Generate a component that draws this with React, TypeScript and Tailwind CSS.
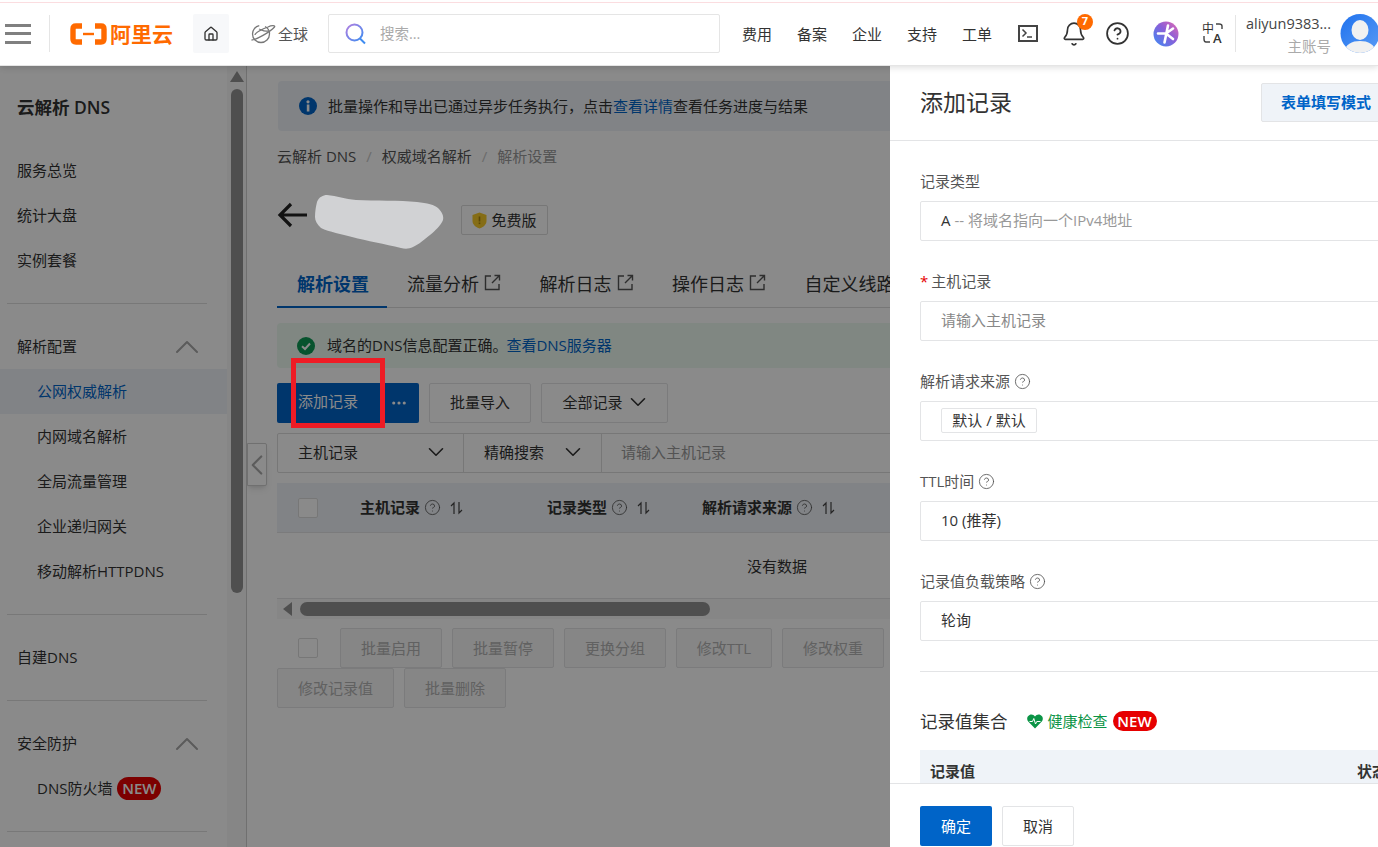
import React from "react";
import { Bell, ChevronDown, ChevronLeft, ChevronUp, CircleHelp, Home, MoreHorizontal } from "lucide-react";

function Ext() {
  return (
    <svg width="17" height="17" viewBox="0 0 17 17" fill="none" stroke="#555" strokeWidth="1.4" className="ml-[5px] mb-[4px] shrink-0">
      <path d="M7 2H1.5V15.5H15V10" />
      <path d="M8 9L15 2M10.5 1.5H15.5V6.5" />
    </svg>
  );
}

function Sort() {
  return (
    <svg width="13" height="14" viewBox="0 0 13 14" fill="none" strokeWidth="1.2" className="shrink-0">
      <path d="M4 13V2L1 5" stroke="#444" />
      <path d="M9 1V12L12 9" stroke="#444" />
    </svg>
  );
}

function Help({ s = 17 }: { s?: number }) {
  return <CircleHelp size={s} strokeWidth={1.2} className="text-[#555] shrink-0" />;
}

function NavRow({ text, active, sub }: { text: React.ReactNode; active?: boolean; sub?: boolean }) {
  return (
    <div
      className={`h-[45px] flex items-center text-[15px] ${sub ? "pl-[37px]" : "pl-[17px]"} ${
        active ? "bg-[#eff3f8] text-[#0064c8]" : "text-[#333]"
      }`}
    >
      {text}
    </div>
  );
}

function NavGroup({ text }: { text: string }) {
  return (
    <div className="h-[45px] flex items-center justify-between pl-[17px] pr-[20px] text-[15px] text-[#333]">
      <span>{text}</span>
      <ChevronUp size={40} strokeWidth={1.2} className="text-[#a8a8a8]" />
    </div>
  );
}

function Divider() {
  return <div className="my-[20px] ml-[7px] w-[200px] border-t border-[#dedede]" />;
}

function Sidebar() {
  return (
    <aside className="w-[247px] shrink-0 flex bg-white border-r border-[#cfcfcf] overflow-hidden">
      <div className="w-[227px] shrink-0">
        <div className="h-[82px] pl-[17px] flex items-center text-[17.5px] font-semibold text-[#333]">云解析 DNS</div>
        <NavRow text="服务总览" />
        <NavRow text="统计大盘" />
        <NavRow text="实例套餐" />
        <Divider />
        <NavGroup text="解析配置" />
        <NavRow sub active text="公网权威解析" />
        <NavRow sub text="内网域名解析" />
        <NavRow sub text="全局流量管理" />
        <NavRow sub text="企业递归网关" />
        <NavRow sub text="移动解析HTTPDNS" />
        <Divider />
        <NavRow text="自建DNS" />
        <Divider />
        <NavGroup text="安全防护" />
        <NavRow
          sub
          text={
            <span className="flex items-center gap-[5px]">
              DNS防火墙
              <span className="h-[23px] w-[44px] rounded-full bg-[#e60000] text-white text-[15px] font-semibold flex items-center justify-center">
                NEW
              </span>
            </span>
          }
        />
        <Divider />
      </div>
      <div className="w-[19px] shrink-0 bg-[#f8f8f8] flex flex-col items-center pt-[5px]">
        <div className="w-0 h-0 border-x-[7px] border-x-transparent border-b-[11px] border-b-[#939393]" />
        <div className="mt-[7px] w-[12px] h-[504px] rounded-full bg-[#939393]" />
      </div>
    </aside>
  );
}

function Btn({ w, children, disabled }: { w: string; children: React.ReactNode; disabled?: boolean }) {
  return (
    <div
      className={`${w} h-[40px] shrink-0 rounded-[2px] border border-[#e3e4e6] flex items-center justify-center text-[15px] ${
        disabled ? "bg-[#f7f7f7] text-[#b3b3b3]" : "bg-white text-[#333]"
      }`}
    >
      {children}
    </div>
  );
}

function Tab({ text }: { text: string }) {
  return (
    <div className="h-full w-[132.5px] shrink-0 pl-[20px] pt-[1px] flex items-center text-[18px] text-[#333] whitespace-nowrap">
      {text}
      <Ext />
    </div>
  );
}

function Col({ w, text }: { w: string; text: string }) {
  return (
    <div className={`${w} shrink-0 flex items-center font-bold text-[15px] text-[#333]`}>
      {text}
      <span className="ml-[4px] mr-[9px]">
        <Help />
      </span>
      <Sort />
    </div>
  );
}

function Content() {
  return (
    <main className="relative w-[643px] shrink-0 bg-white pl-[31px] pt-[15px] overflow-hidden">
      <div className="w-[800px] h-[50px] rounded-[4px] bg-[#eff3f8] flex items-center pl-[21px] text-[15px] text-[#333]">
        <svg width="18" height="18" viewBox="0 0 18 18" className="mr-[11px] shrink-0">
          <circle cx="9" cy="9" r="9" fill="#0064c8" />
          <rect x="7.8" y="7.5" width="2.6" height="7" fill="#fff" />
          <circle cx="9" cy="4.8" r="1.6" fill="#fff" />
        </svg>
        批量操作和导出已通过异步任务执行，点击<span className="text-[#0064c8]">查看详情</span>查看任务进度与结果
      </div>

      <div className="mt-[15px] h-[20px] -ml-[1px] flex items-center text-[15px] text-[#555]">
        <span>云解析 DNS</span>
        <span className="mx-[10px] text-[#c8c8c8]">/</span>
        <span>权威域名解析</span>
        <span className="mx-[10px] text-[#c8c8c8]">/</span>
        <span className="text-[#999]">解析设置</span>
      </div>

      <div className="mt-[39px] h-[30px] -ml-[1px] flex items-center">
        <svg width="30" height="26" viewBox="0 0 30 26" fill="none" stroke="#222" strokeWidth="3.2" className="-mt-[10px] shrink-0">
          <path d="M30 13H3M14 2L3 13L14 24" />
        </svg>
        <div className="ml-[154px] w-[87px] h-[30px] rounded-[2px] border border-[#dcdcdc] flex items-center justify-center gap-[4px] text-[15px] text-[#333]">
          <svg width="15" height="17" viewBox="0 0 15 17" className="shrink-0">
            <path d="M7.5 0.5L14.5 3V9C14.5 13 10.5 15.5 7.5 16.5C4.5 15.5 0.5 13 0.5 9V3Z" fill="#f5c92a" />
            <rect x="6.7" y="4.5" width="1.6" height="5" fill="#a8850a" />
            <rect x="6.7" y="10.5" width="1.6" height="1.6" fill="#a8850a" />
          </svg>
          免费版
        </div>
      </div>

      <div className="mt-[26px] -ml-[1px] h-[47px] w-[800px] border-b border-[#dcdcdc] flex">
        <div className="w-[110px] h-[47px] shrink-0 border-b-2 border-[#0064c8] pl-[20px] pt-[1px] flex items-center text-[18px] font-semibold text-[#0064c8]">
          解析设置
        </div>
        <Tab text="流量分析" />
        <Tab text="解析日志" />
        <Tab text="操作日志" />
        <Tab text="自定义线路" />
      </div>

      <div className="mt-[15px] -ml-[1px] w-[800px] h-[45px] rounded-[4px] bg-[#ecfaf1] flex items-center pl-[20px] text-[15px] text-[#333]">
        <svg width="18" height="18" viewBox="0 0 18 18" fill="none" className="mr-[12px] shrink-0">
          <circle cx="9" cy="9" r="9" fill="#0d9a55" />
          <path d="M5 9.2L8 12L13 6.5" stroke="#fff" strokeWidth="2" />
        </svg>
        域名的DNS信息配置正确。<span className="-ml-[1px] text-[#0064c8]">查看DNS服务器</span>
      </div>

      <div className="mt-[15px] -ml-[1px] flex">
        <div className="w-[102px] h-[40px] rounded-l-[2px] bg-[#0064c8] text-white text-[15px] flex items-center pl-[21px] pb-[3px]">添加记录</div>
        <div className="w-[40px] h-[40px] rounded-r-[2px] bg-[#0064c8] text-white flex items-center justify-center">
          <MoreHorizontal size={18} strokeWidth={2.2} />
        </div>
        <div className="ml-[10px]">
          <Btn w="w-[102px] pb-[2px]">批量导入</Btn>
        </div>
        <div className="ml-[10px]">
          <Btn w="w-[127px] pb-[2px]">
            <span>全部记录</span>
            <ChevronDown size={26} strokeWidth={1.5} className="ml-[2px] -mr-[4px]" />
          </Btn>
        </div>
      </div>

      <div className="mt-[10px] -ml-[1px] w-[800px] h-[40px] rounded-[2px] border border-[#dcdcdc] flex items-center text-[15px] text-[#333]">
        <div className="w-[186px] h-full shrink-0 border-r border-[#dcdcdc] pl-[20px] pr-[14px] pb-[2px] flex items-center justify-between">
          主机记录 <ChevronDown size={26} strokeWidth={1.5} />
        </div>
        <div className="w-[138px] h-full shrink-0 border-r border-[#dcdcdc] pl-[20px] pr-[15px] pb-[2px] flex items-center justify-between">
          精确搜索 <ChevronDown size={26} strokeWidth={1.5} />
        </div>
        <div className="pl-[20px] pb-[2px] -ml-[1px] text-[#999]">请输入主机记录</div>
      </div>

      <div className="mt-[10px] -ml-[1px] w-[800px] h-[50px] bg-[#eff3f8] border-b border-[#e3e4e6] flex items-center pl-[21px]">
        <div className="w-[20px] h-[20px] rounded-[2px] border border-[#dcdcdc] bg-white shrink-0 mr-[42px]" />
        <Col w="w-[187px]" text="主机记录" />
        <Col w="w-[155px]" text="记录类型" />
        <Col w="w-[220px]" text="解析请求来源" />
      </div>
      <div className="-ml-[1px] w-[800px] h-[66px] pt-[1px] border-b border-[#e3e4e6] flex items-center pl-[470px] text-[15px] text-[#333]">
        没有数据
      </div>
      <div className="-ml-[1px] w-[800px] h-[20px] bg-[#f8f8f8] flex items-center pl-[6px]">
        <div className="w-0 h-0 border-y-[7px] border-y-transparent border-r-[9px] border-r-[#939393]" />
        <div className="ml-[8px] w-[410px] h-[14px] rounded-full bg-[#939393]" />
      </div>

      <div className="mt-[9px] -ml-[1px] w-[613px] flex flex-wrap">
        <div className="h-[40px] pl-[21px] pr-[22px] flex items-center">
          <div className="w-[20px] h-[20px] rounded-[2px] border border-[#dcdcdc] bg-white" />
        </div>
        <Btn w="w-[102px] mr-[10px]" disabled>批量启用</Btn>
        <Btn w="w-[102px] mr-[10px]" disabled>批量暂停</Btn>
        <Btn w="w-[102px] mr-[10px]" disabled>更换分组</Btn>
        <Btn w="w-[96px] mr-[10px]" disabled>修改TTL</Btn>
        <Btn w="w-[102px]" disabled>修改权重</Btn>
        <Btn w="w-[117px] mr-[10px]" disabled>修改记录值</Btn>
        <Btn w="w-[102px]" disabled>批量删除</Btn>
      </div>

      <div className="absolute left-0 top-[377px] w-[20px] h-[43px] bg-white border border-[#cfcfcf] rounded-r-[2px] shadow-md flex items-center justify-center text-[#aaa]">
        <ChevronLeft size={34} strokeWidth={1.5} className="shrink-0" />
      </div>
    </main>
  );
}

function Field({ label, children, help, req }: { label: string; children: React.ReactNode; help?: boolean; req?: boolean }) {
  return (
    <div className="mb-[30px]">
      <div className="h-[20px] pt-[1px] flex items-center text-[15px] text-[#555]">
        {req && <span className="text-[#e60000] mr-[3px]">*</span>}
        {label}
        {help && (
          <span className="ml-[4px]">
            <Help />
          </span>
        )}
      </div>
      <div className="mt-[10px] w-[520px] h-[40px] rounded-[2px] border border-[#e3e4e6] pl-[20px] pb-[1px] flex items-center text-[15px]">
        {children}
      </div>
    </div>
  );
}

function Drawer() {
  return (
    <section className="w-[488px] shrink-0 flex flex-col bg-white overflow-hidden">
      <div className="h-[75px] shrink-0 border-b border-[#e3e4e6] pl-[30px] flex items-center">
        <div className="w-[91px] shrink-0 -mt-[1px] text-[23px] text-[#333] whitespace-nowrap">添加记录</div>
        <div className="ml-[250px] w-[130px] h-[39px] -mt-[2px] shrink-0 rounded-[2px] bg-[#eff3f8] border border-[#e3e4e6] pl-[19px] flex items-center text-[15px] font-semibold text-[#0064c8] whitespace-nowrap">
          表单填写模式
        </div>
      </div>
      <div className="flex-1 overflow-hidden pl-[30px] pt-[30px]">
        <Field label="记录类型">
          <span className="text-[#333]">A</span>
          <span className="text-[#999] ml-[4px]">-- 将域名指向一个IPv4地址</span>
        </Field>
        <Field label="主机记录" req>
          <span className="text-[#888]">请输入主机记录</span>
        </Field>
        <Field label="解析请求来源" help>
          <span className="h-[25px] w-[96px] rounded-[2px] border border-[#e3e4e6] flex items-center justify-center text-[15px] text-[#333] whitespace-nowrap">
            默认 / 默认
          </span>
        </Field>
        <Field label="TTL时间" help>
          <span className="text-[#333]">10 (推荐)</span>
        </Field>
        <Field label="记录值负载策略" help>
          <span className="text-[#333]">轮询</span>
        </Field>
        <div className="w-[520px] border-t border-[#e3e4e6]" />
        <div className="mt-[39px] h-[20px] flex items-center">
          <span className="text-[17.5px] text-[#333]">记录值集合</span>
          <svg width="16" height="15" viewBox="0 0 16 15" className="ml-[19px] shrink-0">
            <path d="M8 14.5L1.2 7.5C-0.6 5.4 0 2 2.6 0.9C4.7 0 6.8 0.8 8 2.6C9.2 0.8 11.3 0 13.4 0.9C16 2 16.6 5.4 14.8 7.5Z" fill="#0b9446" />
            <path d="M2.5 7.5H5.5L6.8 4.5L8.5 10L9.8 7.5H13.5" fill="none" stroke="#fff" strokeWidth="1" />
          </svg>
          <span className="ml-[5px] text-[15px] text-[#0b9446]">健康检查</span>
          <span className="ml-[5px] h-[20px] w-[44px] rounded-full bg-[#e60000] text-white text-[15px] font-semibold flex items-center justify-center">
            NEW
          </span>
        </div>
        <div className="mt-[19px] w-[520px] h-[60px] bg-[#eff3f8] pl-[10px] pt-[10px] flex font-bold text-[15px] text-[#333]">
          <span className="w-[427px] shrink-0">记录值</span>
          <span>状态</span>
        </div>
      </div>
      <div className="h-[64px] shrink-0 border-t border-[#e3e4e6] pl-[30px] pt-[22px] flex gap-[10px] bg-white">
        <div className="w-[72px] h-[40px] rounded-[2px] bg-[#0064c8] text-white text-[15px] flex items-center justify-center">确定</div>
        <div className="w-[72px] h-[40px] rounded-[2px] border border-[#e3e4e6] text-[#333] text-[15px] flex items-center justify-center">取消</div>
      </div>
    </section>
  );
}

function Header() {
  return (
    <header className="relative z-20 shrink-0 bg-white shadow-[0_2px_6px_rgba(0,0,0,0.12)]">
      <div className="h-[3px] border-b border-[#fbdde0]" />
      <div className="h-[63px] flex items-center border-b border-[#e5e5e5] pb-[1px]">
        <div className="ml-[5px] w-[26px] h-[20px] flex flex-col justify-between shrink-0">
          <div className="h-[3px] bg-[#808080]" />
          <div className="h-[3px] bg-[#808080]" />
          <div className="h-[3px] bg-[#808080]" />
        </div>
        <div className="ml-[18px] h-[37px] shrink-0 border-l border-[#e5e5e5]" />
        <svg width="37" height="22" viewBox="0 0 37 22" className="ml-[20px] shrink-0" fill="none" stroke="#ff6a00" strokeLinejoin="round">
          <path d="M12 3H6C4 3 3 4 3 6V16C3 18 4 19 6 19H12" strokeWidth="5.4" />
          <path d="M25 3H31C33 3 34 4 34 6V16C34 18 33 19 31 19H25" strokeWidth="5.4" />
          <path d="M13 11H24" strokeWidth="2.4" />
        </svg>
        <span className="ml-[3px] mt-[1px] w-[63px] shrink-0 text-[21px] leading-none font-bold text-[#ff6a00] whitespace-nowrap">阿里云</span>
        <div className="ml-[20px] w-[36px] h-[39px] shrink-0 rounded-[2px] bg-[#f7f8fa] flex items-center justify-center">
          <Home size={16} strokeWidth={2} className="text-[#333]" />
        </div>
        <svg width="26" height="24" viewBox="0 0 26 24" fill="none" stroke="#777" strokeWidth="1.3" className="ml-[21px] shrink-0">
          <circle cx="11" cy="12" r="8.5" strokeDasharray="38 6" />
          <path d="M1.5 18C6 18 20 10 24.5 5C25.5 3.5 22 3 18 5C12 7 5 11 5 13" />
          <path d="M9 7C12 8 14 10 18 9" />
        </svg>
        <span className="ml-[2px] mt-[1px] w-[30px] shrink-0 text-[15px] text-[#555] whitespace-nowrap">全球</span>
        <div className="ml-[20px] w-[392px] h-[39px] rounded-[2px] border border-[#e5e5e5] flex items-center pl-[16px] shrink-0">
          <svg width="21" height="22" viewBox="0 0 21 22" fill="none" strokeWidth="2" className="shrink-0">
            <defs>
              <linearGradient id="sg" x1="0" y1="0" x2="1" y2="1">
                <stop offset="0" stopColor="#b27fe0" />
                <stop offset="1" stopColor="#3f8cf0" />
              </linearGradient>
            </defs>
            <circle cx="9.5" cy="9.5" r="8" stroke="url(#sg)" />
            <path d="M15 15.5L20 20.5" stroke="#3f8cf0" />
          </svg>
          <span className="ml-[14px] mt-[1px] text-[14.5px] text-[#aaa]">搜索...</span>
        </div>
        <div className="ml-[22px] mt-[1px] w-[250px] flex gap-[25px] text-[15px] text-[#333] whitespace-nowrap shrink-0">
          <span>费用</span>
          <span>备案</span>
          <span>企业</span>
          <span>支持</span>
          <span>工单</span>
        </div>
        <svg width="20" height="17" viewBox="0 0 20 17" fill="none" stroke="#444" className="ml-[26px] shrink-0">
          <rect x="1" y="1" width="18" height="15" strokeWidth="2" />
          <path d="M4.5 4.5L8 8L4.5 11.5" strokeWidth="1.5" />
          <path d="M9 12H14" strokeWidth="1.5" />
        </svg>
        <div className="relative ml-[23px] -mt-[2px] w-[24px] h-[24px] shrink-0">
          <Bell size={26} strokeWidth={1.5} className="text-[#333]" />
          <span className="absolute -top-[7px] left-[16px] w-[16px] h-[16px] rounded-full bg-[#ff6a00] text-white text-[11px] font-bold flex items-center justify-center">
            7
          </span>
        </div>
        <CircleHelp size={25} strokeWidth={1.7} className="ml-[20px] text-[#333] shrink-0" />
        <svg width="26" height="26" viewBox="0 0 26 26" className="ml-[23px] shrink-0">
          <defs>
            <linearGradient id="ag" x1="0" y1="1" x2="1" y2="0">
              <stop offset="0" stopColor="#3a8cf5" />
              <stop offset="0.55" stopColor="#8a5fd8" />
              <stop offset="1" stopColor="#e56ab0" />
            </linearGradient>
          </defs>
          <circle cx="13" cy="13" r="12.5" fill="url(#ag)" />
          <path d="M15 4.5L11.5 21.5M5 12.5H13M13 12.5L20 7.5M13 12.5L20 18" stroke="#fff" strokeWidth="2.6" strokeLinecap="round" />
        </svg>
        <svg width="20" height="21" viewBox="0 0 20 21" className="ml-[24px] shrink-0 overflow-visible" fill="none" stroke="#444" strokeWidth="1.4">
          <text x="-1" y="10" fontSize="12" fill="#333" stroke="none" fontFamily="'Noto Sans CJK SC', sans-serif">中</text>
          <text x="10" y="20" fontSize="13" fontWeight="600" fill="#333" stroke="none" fontFamily="'Open Sans', sans-serif">A</text>
          <path d="M13 1H16C18 1 19 2 19 3V6" />
          <path d="M1 13V16C1 18 2 19 3 19H7" />
        </svg>
        <div className="ml-[12px] h-[37px] shrink-0 border-l border-[#e5e5e5]" />
        <div className="ml-[11px] w-[84px] mt-[3px] shrink-0 flex flex-col items-end text-[14.5px] leading-[23px] whitespace-nowrap">
          <span className="text-[#444]">aliyun9383...</span>
          <span className="text-[#aaa]">主账号</span>
        </div>
        <svg width="40" height="39" viewBox="0 0 40 39" className="ml-[9px] shrink-0">
          <defs>
            <linearGradient id="bg" x1="0" y1="0" x2="1" y2="1">
              <stop offset="0" stopColor="#1f72ee" />
              <stop offset="1" stopColor="#5a9bf5" />
            </linearGradient>
            <clipPath id="cp">
              <circle cx="20" cy="19.5" r="19.5" />
            </clipPath>
          </defs>
          <circle cx="20" cy="19.5" r="19.5" fill="url(#bg)" />
          <g clipPath="url(#cp)" fill="#f1f1f1">
            <ellipse cx="20" cy="16" rx="8.5" ry="10" />
            <path d="M4 39C5 30 12 27 20 27C28 27 35 30 36 39Z" />
          </g>
        </svg>
      </div>
    </header>
  );
}

export default function App() {
  return (
    <div className="w-[1378px] h-[847px] overflow-hidden flex flex-col bg-white [font-family:'Open_Sans','Noto_Sans_CJK_SC',sans-serif]">
      <Header />
      <div className="flex-1 flex min-h-0">
        <div className="relative w-[890px] shrink-0 flex overflow-hidden">
          <Sidebar />
          <Content />
          <div className="absolute inset-0 bg-black/46" />
          <svg width="130" height="54" viewBox="0 0 130 54" className="absolute left-[315px] top-[129px]">
            <path
              d="M2 7C4 2 8 0 12 0C22 1 30 4 41 5C60 6 85 5 102 7C112 8 120 10 123 13C127 17 129 21 128 25C126 30 120 36 115 40C110 44 103 50 98 52C94 54 90 54 86 53C70 49 52 46 37 42C27 39 14 37 6 33C2 29 0 26 0 22C0 16 1 11 2 7Z"
              fill="#d1d2d4"
            />
          </svg>
          <div className="absolute left-[291px] top-[292px] w-[94px] h-[70px] border-[5px] border-[#ee1c25]" />
        </div>
        <Drawer />
      </div>
    </div>
  );
}
